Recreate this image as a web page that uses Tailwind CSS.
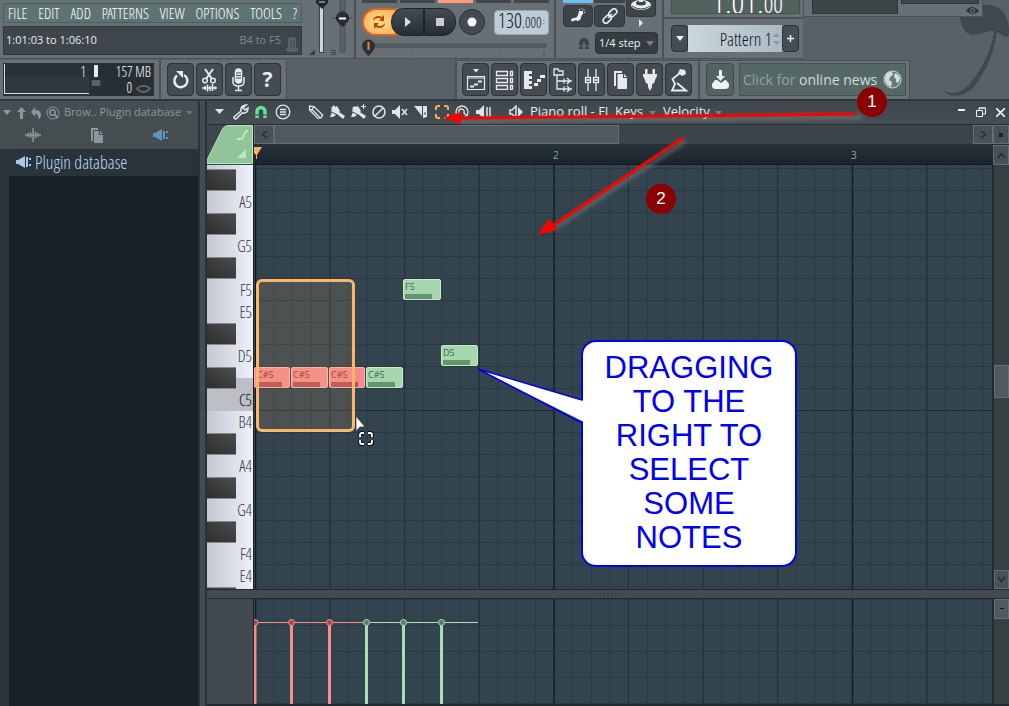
<!DOCTYPE html>
<html lang="en">
<head>
<meta charset="utf-8">
<title>Piano roll - FL Keys</title>
<script src="https://cdn.jsdelivr.net/npm/@tailwindcss/browser@4"></script>
</head>
<body class="relative flex h-screen flex-col overflow-hidden bg-[#596167] font-['Open_Sans','Noto_Sans',sans-serif] text-[#e6ecee]">

<header class="relative flex h-[101px] shrink-0 flex-col border-b-2 border-[#30373c]">
  <!-- leaf logo -->
  <svg class="absolute top-0 right-0" width="70" height="98" viewBox="0 0 70 98" aria-hidden="true">
    <path d="M21 17c1 7 3 14 9 17 7 2 12 0 17-2 6-2 10-1 13 1 3 1 5 4 8 4 2-1 2-4 2-7 0-8-3-16-9-21-5-4-12-5-18-4v12z" fill="#40484d"/>
    <path d="M55 31C53 48 46 62 38 74 29 88 18 98 4 90 10 98 23 98 34 88 48 71 56 50 58 31z" fill="#40484d"/>
  </svg>

  <div class="relative flex h-[60px] items-start">
    <!-- menu and hint panel -->
    <section class="flex h-[59px] w-[306px] flex-col gap-[3px] border-b border-[#4b5257] bg-[#687076] px-[3px] pt-[3px]">
      <nav class="flex h-5 w-[299px] items-center justify-between border border-[#4c5f60] bg-[#5c7472] px-1 font-['Open_Sans_Condensed_Light','Liberation_Sans_Narrow','Open_Sans_Condensed',sans-serif] text-[15px] leading-[18px] text-white">
        <button>FILE</button><button>EDIT</button><button>ADD</button><button>PATTERNS</button><button>VIEW</button><button>OPTIONS</button><button>TOOLS</button><button>?</button>
      </nav>
      <div class="flex h-[29px] w-[299px] items-center border border-[#31383d] bg-[#3e464b] px-[2px] text-[11px]">
        <span class="-mt-px grow">1:01:03 to 1:06:10</span><span class="text-[#7f898e]">B4 to F5</span>
        <svg class="ml-1 mt-2" width="14" height="17" viewBox="0 0 14 17" aria-hidden="true"><path d="M3 2q4-2 8 0v9l2 2q1 3-6 3t-6-3l2-2z" fill="#596267"/><path d="M6 4v8M9 4v8" stroke="#414a4f"/></svg>
      </div>
    </section>

    <!-- master sliders -->
    <section class="h-[59px] w-[48px] border-b border-[#4b5257] bg-[#687076]">
      <svg width="48" height="58" viewBox="0 0 48 58" aria-hidden="true">
        <rect x="13" y="0" width="5" height="53" fill="#40474c"/><rect x="14" y="5" width="3" height="47" fill="#ccd6da"/>
        <path d="M10 0h12v3l-6 6-6-6z" fill="#23282c"/><path d="M13 2h6" stroke="#ccd6da"/>
        <rect x="34" y="0" width="5" height="52" fill="#596066" stroke="#4b5257"/>
        <path d="M26 18h21" stroke="#454c51"/><circle cx="36.500" cy="18" r="6" fill="#2a3034" stroke="#1d2225"/><path d="M33 18.500h7" stroke="#fff" stroke-width="2"/><path d="M33 24h7l-3 3z" fill="#24292c"/>
        <path d="M9 49v6H3zM25 50h5v1h-5zm0 2h5v1h-5zm0 2h5v1h-5z" fill="#3b4247"/>
      </svg>
    </section>

    <!-- transport -->
    <section class="flex h-[59px] w-[200px] flex-col border-b border-l-2 border-[#4b5257] bg-[#687076] pr-[5px] pl-[6px]">
      <div class="flex h-1 justify-between">
        <button aria-label="Pattern mode" class="h-[3px] w-[35px] bg-[#40474c]"></button><button aria-label="Song mode" class="h-[3px] w-[35px] bg-[#40474c]"></button><button aria-label="Metronome" class="h-[3px] w-[35px] bg-[#ff9c78]"></button><button aria-label="Wait for input" class="h-[3px] w-[35px] bg-[#40474c]"></button><button aria-label="Countdown" class="h-[3px] w-[35px] bg-[#40474c]"></button>
      </div>
      <div class="mt-1 flex items-center">
        <button aria-label="Loop record" class="flex h-7 w-[35px] items-center rounded-l-full border-2 border-[#d4662c] bg-radial from-[#ffdf8c] to-[#ffad55] pl-[7px]">
          <svg width="16" height="16" viewBox="0 0 16 16"><path d="M2 7c0-5 6-6 9-4l2-2v6H8l2-2C8 3 4 4 2 7zM14 9c0 5-6 6-9 4l-2 2V9h5l-2 2c2 2 6 1 8-2z" fill="#b54a0c"/></svg>
        </button>
        <button aria-label="Play" class="-ml-[6px] flex h-7 w-[33px] items-center justify-center rounded-l-[13px] border border-[#1e2327] bg-linear-to-b from-[#454d52] to-[#272d31]"><svg width="8" height="12" viewBox="0 0 8 12"><path d="M1 1l6 5-6 5z" fill="#d7dde0"/></svg></button>
        <button aria-label="Stop" class="flex h-7 w-[32px] items-center justify-center rounded-r-[13px] border border-[#1e2327] bg-linear-to-b from-[#454d52] to-[#272d31]"><svg width="8" height="8"><rect width="8" height="8" fill="#c6cccf"/></svg></button>
        <button aria-label="Record" class="ml-[3px] flex size-[26px] items-center justify-center rounded-full border border-[#272d31] bg-[#434b50]"><svg width="10" height="10"><circle cx="5" cy="5" r="4.500" fill="#f3f6f7"/></svg></button>
        <label class="ml-[9px] flex h-[25px] w-[55px] items-center justify-between rounded border border-[#98a7ae] bg-[#bccdd6] px-[3px] font-['Open_Sans_Condensed_Light','Liberation_Sans_Narrow','Open_Sans_Condensed',sans-serif] text-[#10151a]">
          <span class="text-[20px] leading-6">130<span class="text-[14px]">.000</span></span>
          <svg width="6" height="12" viewBox="0 0 6 12"><path d="M0 4l3-3 3 3zM0 8l3 3 3-3z" fill="#93a3ab"/></svg>
        </label>
      </div>
      <svg width="187" height="22" viewBox="0 0 187 22" aria-hidden="true"><rect x="6" y="8" width="178" height="3" fill="#596066" stroke="#444b50"/><path d="M50 19v2M94 19v2M138 19v2M182 14v7" stroke="#444b50"/><path d="M0 10a6.500 6.500 0 1 1 13 0q0 4-6.500 10Q0 14 0 10z" fill="#2b3135"/><path d="M6.500 6v8" stroke="#ff7a3c" stroke-width="2"/></svg>
    </section>

    <!-- snap panel -->
    <section class="flex h-[59px] w-[108px] flex-col border-b border-l-2 border-[#4b5257] bg-[#687076] pl-[7px]">
      <div class="flex gap-px">
        <div class="flex flex-col gap-0.5"><button aria-label="Typing keyboard" class="h-[3px] w-[30px] bg-[#6cc0f2]"></button>
          <button aria-label="Step edit" class="flex h-[22px] w-[30px] items-center justify-center rounded-sm border border-[#30363a] bg-[#3d454a]"><svg width="16" height="16" viewBox="0 0 16 16"><path d="M1 12q0-2 3-2 3 0 4-3l1-4h4v3q-2 1-2 4-1 3-4 3l-1-1-2 1q-3 1-3-1z" fill="#eef1f2"/><path d="M9 1.500h1M11.500 1h1M14 1.500v1M14.500 4v1" stroke="#eef1f2" stroke-width="1.200"/></svg></button></div>
        <div class="flex flex-col gap-0.5"><button aria-label="Scroll" class="h-[3px] w-[31px] bg-[#3d454a]"></button>
          <button aria-label="Multilink" class="flex h-[22px] w-[31px] items-center justify-center rounded-sm border border-[#30363a] bg-[#3d454a]"><svg width="16" height="16" viewBox="0 0 16 16" fill="none" stroke="#e8ecee" stroke-width="1.600"><rect x="6.500" y="2" width="9" height="5.500" rx="2.700" transform="rotate(-45 11 5)"/><rect x="0.500" y="8.500" width="9" height="5.500" rx="2.700" transform="rotate(-45 5 11)"/><path d="M6 10l4-4"/></svg></button></div>
        <div class="flex flex-col items-center gap-[2px]"><button aria-label="Tool" class="flex h-[17px] w-[30px] items-start justify-center rounded-b-sm border border-t-0 border-[#30363a] bg-[#3d454a]"><svg width="22" height="12" viewBox="0 0 22 12"><ellipse cx="11" cy="5" rx="10" ry="5" fill="#eef1f2"/><ellipse cx="11" cy="3" rx="5" ry="2.500" fill="#3d454a"/><path d="M2 6q9 6 18 0" fill="none" stroke="#3d454a"/><path d="M9 0h4v2H9z" fill="#eef1f2"/></svg></button>
          <svg width="6" height="8"><path d="M1 0l4 4-4 4z" fill="#dfe4e6"/></svg></div>
      </div>
      <div class="mt-[5px] flex h-[22px] items-center gap-[3px] pl-[14px]">
        <svg width="15" height="14" viewBox="0 0 15 14" aria-hidden="true"><path d="M2 13V7a5 5 0 0 1 10 0v6H8V7.500a1 1 0 0 0-2 0V13z" fill="#3c4247"/><path d="M2 10h4M8 10h4" stroke="#687076"/></svg>
        <div class="relative flex">
          <select aria-label="Snap" class="h-[22px] w-[63px] appearance-none rounded-sm border border-[#2b3135] bg-[#363d42] pl-[3px] text-[11px] text-[#eef2f3]"><option>1/4 step</option></select>
          <svg class="pointer-events-none absolute top-[9px] right-1" width="8" height="5"><path d="M0 0h8L4 5z" fill="#788086"/></svg>
        </div>
      </div>
    </section>

    <!-- time and pattern panel -->
    <section class="flex h-[59px] w-[141px] flex-col border-b border-l-2 border-[#4b5257] bg-[#687076]">
      <div class="h-[19px] border-b-2 border-[#4b5257] pl-[7px]">
        <div class="flex h-[14px] w-[129px] items-end justify-center overflow-hidden border border-t-0 border-[#46504f] bg-[#52625f] font-['Open_Sans_Condensed_Light','Liberation_Sans_Narrow','Open_Sans_Condensed',sans-serif] text-white">
          <span class="mb-[-3px] ml-6 text-[32px] leading-[28px]">1:01.</span><span class="mb-[-3px] text-[24px] leading-[24px]">00</span>
        </div>
      </div>
      <div class="mt-[6px] flex pl-[7px]">
        <button aria-label="Pattern menu" class="flex h-[27px] w-[17px] items-center justify-center rounded-sm border border-[#2b3135] bg-[#464e53]"><svg width="8" height="5"><path d="M0 0h8L4 5z" fill="#eef2f3"/></svg></button>
        <label class="flex h-[27px] w-[94px] items-center bg-linear-to-r from-[#c9d6db] to-[#acbbc3] pr-[2px]">
          <input aria-label="Pattern" value="Pattern 1" class="w-0 grow text-right font-['Open_Sans_Condensed_Light','Liberation_Sans_Narrow','Open_Sans_Condensed',sans-serif] text-[18px] leading-6 text-[#10151a]">
          <svg class="ml-px" width="7" height="14" viewBox="0 0 7 14"><path d="M0 5l3.500-4 3.500 4zM0 9l3.500 4 3.500-4z" fill="#8b989f"/></svg>
        </label>
        <button aria-label="Add pattern" class="flex h-[27px] w-[17px] items-center justify-center rounded-sm border border-[#2b3135] bg-[#464e53]"><svg width="9" height="9"><path d="M4.500 1v7M1 4.500h7" stroke="#eef2f3" stroke-width="1.500"/></svg></button>
      </div>
    </section>

    <!-- scope and meter -->
    <section class="flex h-[17px] w-[180px] gap-[3px] border-r border-b border-l border-[#4b5257] bg-[#687076] pl-[8px]">
      <div class="h-[14px] w-[86px] border border-t-0 border-[#2f363a] bg-[#3d4549]"></div>
      <div class="flex w-[78px] flex-col items-end"><div class="h-1 w-full border border-t-0 border-[#2f363a] bg-[#3d4549]"></div>
        <svg class="mt-[2px]" width="13" height="9" viewBox="0 0 13 9"><path d="M0 5q6-8 13 0-6 6-13 0z" fill="#2c3337"/><circle cx="6.500" cy="4.500" r="2.500" fill="#687076"/><circle cx="6.500" cy="4.500" r="1.300" fill="#2c3337"/></svg></div>
    </section>
  </div>

  <div class="relative flex h-[39px]">
    <section class="w-[159px] bg-[#687076] pt-[3px] pl-[3px]">
      <div class="flex h-[33px] w-[151px] border border-[#2b3236] bg-[#262f34] font-['Open_Sans_Condensed_Light','Liberation_Sans_Narrow','Open_Sans_Condensed',sans-serif] text-[14px] leading-4 text-white">
        <div class="mb-px w-[85px] border-b border-l border-[#d5dde0] bg-linear-to-b from-[#2a3237] from-40% to-[#303a3e] to-50% pr-[3px] text-right">1</div>
        <svg class="mt-px" width="14" height="26" viewBox="0 0 14 26" aria-hidden="true"><rect x="5" width="4" height="12" fill="#e6ecee"/><rect x="3" y="15" width="8" height="6" rx="1" fill="#596267"/><path d="M2 16.500h10M2 19.500h10" stroke="#596267"/></svg>
        <div class="flex grow flex-col items-end pr-[2px]"><span>157 MB</span><span class="flex items-center gap-1">0 <svg width="15" height="9" viewBox="0 0 15 9"><path d="M1 4.500q3-3 6.500-2.500Q11 1.500 14 4.500 11 8 7.500 8T1 4.500z" fill="none" stroke="#596267" stroke-width="2"/></svg></span></div>
      </div>
    </section>
    <section class="flex w-[127px] gap-[2px] border-l-2 border-[#4b5257] bg-[#687076] pt-[3px] pl-[6px]">
      <button aria-label="Undo" class="flex h-[33px] w-[27px] items-center justify-center rounded-sm border border-[#2d3439] bg-[#444c51]"><svg width="18" height="20" viewBox="0 0 18 20"><path d="M5 5.500A6.500 6.500 0 1 0 12 5" fill="none" stroke="#e6eaec" stroke-width="2.500"/><path d="M4 1h7v7z" fill="#e6eaec"/></svg></button>
      <button aria-label="Edison" class="flex h-[33px] w-[27px] items-center justify-center rounded-sm border border-[#2d3439] bg-[#444c51]"><svg width="17" height="26" viewBox="0 0 17 26" fill="none" stroke="#e6eaec"><path d="M4 2l7 10M12 2L5 12" stroke-width="2"/><circle cx="4" cy="13.500" r="2.300" stroke-width="1.500"/><circle cx="12" cy="13.500" r="2.300" stroke-width="1.500"/><path d="M1 21h15M4 19v4M6.500 17.500v7M9 19v5M11.500 17v7M14 19.500v3" stroke-width="1.500"/></svg></button>
      <button aria-label="Record audio" class="flex h-[33px] w-[27px] items-center justify-center rounded-sm border border-[#2d3439] bg-[#444c51]"><svg width="15" height="26" viewBox="0 0 15 26" fill="none" stroke="#e6eaec" stroke-width="1.500"><rect x="4.500" y="2" width="6" height="14" rx="3" fill="#e6eaec"/><path d="M5 6h5M5 8.500h5M5 11h5" stroke="#444c51" stroke-width="1"/><path d="M2 10v5q0 4 5.500 4t5.500-4v-5M7.500 19v4M4 23.500h7"/></svg></button>
      <button aria-label="Help" class="flex h-[33px] w-[27px] items-center justify-center rounded-sm border border-[#2d3439] bg-[#444c51] text-[21px] font-bold leading-none">?</button>
    </section>
    <div class="w-[169px] border-l border-[#4b5257]"></div>
    <section class="flex w-[243px] gap-[2px] border-t border-l-2 border-[#4b5257] bg-[#687076] pt-[2px] pl-[5px]">
      <button aria-label="Playlist" class="flex h-[33px] w-[27px] items-center justify-center rounded-sm border border-[#2d3439] bg-[#444c51]"><svg width="20" height="24" viewBox="0 0 20 24" fill="none" stroke="#e6eaec"><path d="M7 1h6l-3 3.500z" fill="#e6eaec" stroke="none"/><path d="M1.500 8.500h17v13h-17zM1 10h18" stroke-width="1.200"/><path d="M4 18.500h4M8 16.500h4M12 13.500h4" stroke-width="2"/></svg></button>
      <button aria-label="Channel rack" class="flex h-[33px] w-[27px] items-center justify-center rounded-sm border border-[#2d3439] bg-[#444c51]"><svg width="19" height="20" viewBox="0 0 19 20" fill="none" stroke="#e6eaec" stroke-width="1.300"><path d="M1.500 1.500h11v4h-11zM1.500 8.500h11v4h-11zM1.500 15.500h11v4h-11zM15.500 1.500h2v4h-2zM15.500 8.500h2v4h-2zM15.500 15.500h2v4h-2z"/></svg></button>
      <button aria-label="Piano roll" class="flex h-[33px] w-[27px] items-center justify-center rounded-sm border border-[#2d3439] bg-[#444c51]"><svg width="22" height="20" viewBox="0 0 22 20" fill="#e6eaec"><path d="M1 1h8v3H6v2h3v3H6v2h3v3H6v2h3v3H1zM11 13h4v3h-4zM14 9h4v3h-4zM17 5h5v3h-5z"/></svg></button>
      <button aria-label="Browser" class="flex h-[33px] w-[27px] items-center justify-center rounded-sm border border-[#2d3439] bg-[#444c51]"><svg width="20" height="26" viewBox="0 0 20 26" fill="none" stroke="#e6eaec" stroke-width="1.300"><path d="M1 8V2h4l1 2h4v4zM4 8v14h5M4 14h5"/><path d="M9 14h10M9 22h10M11 11.500v5M14 11l3 3-3 3M11 19.500v5M14 19l3 3-3 3"/></svg></button>
      <button aria-label="Mixer" class="flex h-[33px] w-[27px] items-center justify-center rounded-sm border border-[#2d3439] bg-[#444c51]"><svg width="16" height="24" viewBox="0 0 16 24" fill="none" stroke="#e6eaec" stroke-width="1.300"><path d="M4 1v8M4 15v8M12 1v8M12 15v8M1.500 9.500h5v5h-5zM9.500 9.500h5v5h-5zM1.500 12h5M9.500 12h5"/></svg></button>
      <button aria-label="Project picker" class="flex h-[33px] w-[27px] items-center justify-center rounded-sm border border-[#2d3439] bg-[#444c51]"><svg width="15" height="20" viewBox="0 0 15 20" fill="#e6eaec"><path d="M1 1h8v2H3v13H1zM4.500 4H10v4h4v11H4.500zM11 4l3 3h-3z"/></svg></button>
      <button aria-label="Plugin picker" class="flex h-[33px] w-[27px] items-center justify-center rounded-sm border border-[#2d3439] bg-[#444c51]"><svg width="16" height="24" viewBox="0 0 16 24" fill="#e6eaec"><path d="M3 1h2.500v5H3zM10.500 1H13v5h-2.500zM1 6h14v2l-2 4q0 3-3 4v3l-2 4-2-4v-3q-3-1-3-4L1 8z"/></svg></button>
      <button aria-label="Tempo tapper" class="flex h-[33px] w-[27px] items-center justify-center rounded-sm border border-[#2d3439] bg-[#444c51]"><svg width="18" height="24" viewBox="0 0 18 24"><path d="M10 1l5 1 1 4-4 2-4-3z" fill="#e6eaec"/><path d="M10 5L2.500 11 5 16l-3 6.500h14L7 15" fill="none" stroke="#e6eaec" stroke-width="1.800"/></svg></button>
    </section>
    <section class="flex w-[212px] gap-[5px] border-t border-r border-l-2 border-[#4b5257] bg-[#687076] pt-[2px] pl-[6px]">
      <button aria-label="Download" class="flex h-[33px] w-[28px] items-center justify-center rounded-sm border border-[#3c4b4b] bg-[#536262]"><svg width="19" height="21" viewBox="0 0 19 21" fill="#eef2f3"><path d="M8 1h3v6h3l-4.500 5L5 7h3zM1 15l3-4h2l4 3 4-3h1l3 4v2q0 3-4 3H5q-4 0-4-3z"/></svg></button>
      <a href="#news" class="flex h-[33px] w-[167px] items-center border border-[#455453] bg-[#566866] pl-[3px] text-[14px] text-[#d2dddd]"><span class="text-[#93a2a1]">Click for&nbsp;</span>online news
        <svg class="ml-auto mr-[3px]" width="19" height="19" viewBox="0 0 19 19"><circle cx="9.500" cy="9.500" r="8.500" fill="#6b7a79" stroke="#d2dddd"/><path d="M3 4q4-3 6-2l1 3-3 2-1 3 3 2-1 5Q2 14 2 9zM12 3q5 2 5 6l-2 4-2-1v-3l-2-2z" fill="#d2dddd"/></svg></a>
    </section>
  </div>
</header>

<div class="flex min-h-0 grow bg-[#3f484d]">
  <!-- browser -->
  <aside class="flex w-[198px] shrink-0 flex-col bg-[#454d51] text-[#8b979c]">
    <div class="flex h-6 items-center pr-[5px] pl-[3px] pb-px text-[11px]">
      <svg width="8" height="5"><path d="M0 0h8L4 5z" fill="#8b979c"/></svg>
      <svg class="ml-[6px]" width="9" height="12" viewBox="0 0 9 12"><path d="M4.500 0L9 5H6v7H3V5H0z" fill="#8b979c"/></svg>
      <svg class="ml-[5px]" width="10" height="12" viewBox="0 0 10 12"><path d="M4 0v3q6 0 6 5 0 3-3 4 1-5-3-5v3L0 5z" fill="#8b979c"/></svg>
      <svg class="ml-[5px]" width="14" height="14" viewBox="0 0 14 14" fill="none" stroke="#8b979c"><circle cx="7" cy="7" r="6"/><circle cx="6.500" cy="6.500" r="2.800" stroke-width="1.500"/><path d="M9 9l3 3" stroke-width="2"/></svg>
      <span class="ml-[4px]">Brow..</span><span class="ml-[3px] grow">Plugin database</span>
      <svg width="7" height="4"><path d="M0 0h7L3.500 4z" fill="#6a757a"/></svg>
    </div>
    <div class="flex h-6 items-center justify-around pr-1 pb-1">
      <button aria-label="All"><svg width="16" height="14" viewBox="0 0 16 14"><path d="M0 7h16M3 5v4M5.500 4v6M8 0v14M10.500 3.500v7M13 5v4" stroke="#8b979c" stroke-width="1.500"/></svg></button>
      <button aria-label="Current project"><svg width="13" height="15" viewBox="0 0 13 15" fill="#8b979c"><path d="M1 0h7v2H3v11H1zM4 3h5v4h4v8H4zM10 3l3 3h-3z"/></svg></button>
      <button aria-label="Plugins"><svg width="16" height="12" viewBox="0 0 16 12" fill="#6493bb"><path d="M0 4h2l7-4v12L2 8H0zM10 2h2v8h-2zM13 2h2v2h-2zM13 8h2v2h-2z"/></svg></button>
    </div>
    <div class="flex grow bg-[#2a343a]">
      <div class="ml-[9px] grow bg-[#182127] text-[#bcd8f8]">
        <button class="flex h-[27px] w-full items-center gap-1 bg-[#29343a] pb-px pl-[7px] font-['Open_Sans_Condensed_Light','Liberation_Sans_Narrow','Open_Sans_Condensed',sans-serif] text-[18px] leading-6"><svg width="15" height="12" viewBox="0 0 15 12" fill="#a9c8ec"><path d="M0 4h2l7-4v12L2 8H0zM10 1h2v10h-2zM13 2h2v2h-2zM13 8h2v2h-2z"/></svg>Plugin database</button>
      </div>
    </div>
  </aside>
  <div class="flex w-[9px] shrink-0 items-center justify-center border-x-2 border-[#293238] bg-[#444c51]"><svg width="5" height="20" aria-hidden="true"><path d="M1.500 0v20M4.500 0v20" stroke="#2c3439" stroke-dasharray="1 3"/></svg></div>

  <!-- piano roll window -->
  <main class="flex min-w-0 grow flex-col">
    <div class="flex h-6 shrink-0 items-center border-b border-[#262e33] bg-linear-to-b from-[#3e474c] to-[#464e53] pb-px pl-2">
      <button aria-label="Menu"><svg width="9" height="6"><path d="M0 0h9L4.500 5z" fill="#dfe5e7"/></svg></button>
      <button aria-label="Tools" class="ml-[9px]"><svg width="16" height="16" viewBox="0 0 16 16"><path d="M1 13l7-6q-1-5 5-6l-3 3 2 2 3-2q0 6-6 5l-6 6q-2 0-2-2z" fill="none" stroke="#dfe5e7" stroke-width="1.600"/></svg></button>
      <button aria-label="Snap" class="ml-[5px]"><svg width="14" height="14" viewBox="0 0 14 14"><path d="M3 13V6.500a4 4 0 0 1 8 0V13" fill="none" stroke="#65e096" stroke-width="3.500"/><path d="M1 10h5M8 10h5" stroke="#3e474c"/></svg></button>
      <button aria-label="Stamp" class="ml-[7px]"><svg width="16" height="16" viewBox="0 0 16 16" fill="none" stroke="#dfe5e7" stroke-width="1.300"><circle cx="8" cy="8" r="6.800"/><path d="M5 5.500h6M5 8h6M5 10.500h6"/></svg></button>
      <button aria-label="Draw" class="ml-[17px]"><svg width="16" height="16" viewBox="0 0 16 16" fill="none" stroke="#dfe5e7" stroke-width="1.300"><path d="M1.500 2v4l8 8q4 1 5-3L6 2.500zM1.500 6l2.500-.5L6 2.500M4 5.500l7.500 7.500"/></svg></button>
      <button aria-label="Paint" class="ml-[5px]"><svg width="17" height="16" viewBox="0 0 17 16" fill="#dfe5e7"><path d="M5 1l1 2 2-1 3 5-1 1 6 4-2 3-6-5-2 1-4-4 1-2-1-1z"/><path d="M1 13l2-5 4 3-3 2z"/><path d="M3 8l5 3" stroke="#444c51"/></svg></button>
      <button aria-label="Paint sequence" class="ml-[4px]"><svg width="17" height="16" viewBox="0 0 17 16" fill="#dfe5e7"><path d="M5 2l1 1 2-1 3 5-1 1 6 4-2 3-6-5-2 1-4-4 1-2-1-1z"/><path d="M1 13l2-5 4 3-3 2zM13 0h1v2h2v1h-2v2h-1V3h-2V2h2z"/><path d="M3 8l5 3" stroke="#444c51"/></svg></button>
      <button aria-label="Delete" class="ml-[5px]"><svg width="14" height="14" viewBox="0 0 14 14" fill="none" stroke="#dfe5e7" stroke-width="1.600"><circle cx="7" cy="7" r="6"/><path d="M3 11l8-8"/></svg></button>
      <button aria-label="Mute" class="ml-[6px]"><svg width="16" height="14" viewBox="0 0 16 14"><path d="M0 5h3l5-5v14L3 9H0z" fill="#dfe5e7"/><path d="M10 4l5 6M15 4l-5 6" stroke="#dfe5e7" stroke-width="1.500"/></svg></button>
      <button aria-label="Slice" class="ml-[5px]"><svg width="17" height="14" viewBox="0 0 17 14"><path d="M1 1h8v10z" fill="#dfe5e7"/><path d="M10 1h4v11l-4 1z" fill="#dfe5e7"/><path d="M12 7v3" stroke="#444"/></svg></button>
      <button aria-label="Select" class="ml-[5px]"><svg width="14" height="14" viewBox="0 0 14 14" fill="none" stroke="#ffa95c" stroke-width="2"><path d="M1 5V3q0-2 2-2h2M9 1h2q2 0 2 2v2M13 9v2q0 2-2 2H9M5 13H3q-2 0-2-2V9"/></svg></button>
      <button aria-label="Zoom" class="ml-[6px]"><svg width="15" height="15" viewBox="0 0 15 15" fill="none" stroke="#dfe5e7" stroke-width="1.300"><circle cx="7" cy="7" r="6"/><path d="M4 8q-1-4 3-4 3 1 2 4l3 3"/></svg></button>
      <button aria-label="Playback" class="ml-[6px]"><svg width="16" height="14" viewBox="0 0 16 14"><path d="M0 5h3l5-5v14L3 9H0z" fill="#dfe5e7"/><path d="M11 2v10M14 2v10" stroke="#dfe5e7" stroke-width="1.500"/></svg></button>
      <button aria-label="Target" class="ml-[17px]"><svg width="15" height="14" viewBox="0 0 15 14"><path d="M1 5h2l4-4v12L3 9H1z" fill="none" stroke="#dfe5e7" stroke-width="1.500"/><path d="M9 2l5 5-5 5z" fill="#dfe5e7"/></svg></button>
      <button class="ml-[6px] text-[13px]">Piano roll - FL Keys</button><svg class="mt-[2px] ml-[6px]" width="7" height="4"><path d="M0 0h7L3.500 4z" fill="#788388"/></svg>
      <button class="ml-[7px] text-[13px]">Velocity</button><svg class="mt-[2px] ml-[5px]" width="7" height="4"><path d="M0 0h7L3.500 4z" fill="#788388"/></svg>
      <div class="ml-auto flex items-center gap-[10px] pr-[4px]">
        <button aria-label="Minimize"><svg width="8" height="10"><path d="M0 3h7" stroke="#eef2f3" stroke-width="2"/></svg></button>
        <button aria-label="Restore"><svg width="10" height="10" viewBox="0 0 10 10" fill="none" stroke="#eef2f3"><path d="M.5 3.500h6v6h-6zM3 3V1h6.500v6H7M3 1h6"/></svg></button>
        <button aria-label="Close"><svg width="9" height="9"><path d="M0 0l9 9M9 0L0 9" stroke="#eef2f3" stroke-width="1.600"/></svg></button>
      </div>
    </div>

    <div class="flex h-10 shrink-0">
      <div class="h-10 w-[47px] shrink-0 border-r border-[#242c31] bg-[#3e474c]">
        <svg width="46" height="39" viewBox="0 0 46 39" aria-hidden="true"><path d="M0 38.500V35L15 5q2-4.500 7-4.500h23.500v38z" fill="#92c49a" stroke="#b6e6bd"/><path d="M30 14h4q2 0 3-4t4-4" fill="none" stroke="#b9e9c4" stroke-width="1.800"/><path d="M30 33h9V24z" fill="#b9e9c4"/></svg>
      </div>
      <div class="flex min-w-0 grow flex-col">
        <div class="flex h-5 border-b border-[#262e33] bg-[#3b4448]">
          <button aria-label="Scroll left" class="flex w-5 shrink-0 items-center justify-center border border-[#656e74] bg-[#495157]"><svg width="7" height="9"><path d="M6 1L1.500 4.500 6 8" fill="none" stroke="#252d32" stroke-width="1.500"/></svg></button>
          <div class="w-[345px] shrink-0 border border-[#656e74] bg-[#51595f]"></div>
          <div class="grow"></div>
          <button aria-label="Scroll right" class="flex w-5 items-center justify-center border border-[#656e74] bg-[#495157]"><svg width="7" height="9"><path d="M1 1l4.500 3.500L1 8" fill="none" stroke="#252d32" stroke-width="1.500"/></svg></button>
          <button aria-label="Zoom reset" class="flex w-4 items-center justify-center border border-[#656e74] bg-[#495157]"><svg width="4" height="4"><rect width="4" height="4" fill="#1c2327"/></svg></button>
        </div>
        <div class="flex grow bg-linear-to-b from-[#27333a] to-[#18232a]">
          <div class="relative grow border-b border-[#101a20] text-[10px] text-[#93a2aa]">
            <svg class="absolute top-[2px] left-0" width="9" height="13" viewBox="0 0 9 13"><path d="M0 0h8L3 8v4H2V8L0 6z" fill="#f5b35f"/></svg>
            <span class="absolute top-[3px] left-[299px]">2</span><span class="absolute top-[3px] left-[597px]">3</span>
          </div>
          <button aria-label="Scroll up" class="flex w-4 items-center justify-center border border-[#656e74] bg-[#495157]"><svg width="9" height="7"><path d="M1 6l3.500-4.500L8 6" fill="none" stroke="#252d32" stroke-width="1.500"/></svg></button>
        </div>
      </div>
    </div>

    <!-- keyboard and note grid -->
    <div class="flex min-h-0 grow overflow-hidden">
      <div class="relative w-[47px] shrink-0 overflow-hidden border-r border-[#18232a] bg-linear-to-r from-[#c4c8d0] to-[#eef1fb] pt-[4px] font-['Open_Sans_Condensed_Light','Liberation_Sans_Narrow','Open_Sans_Condensed',sans-serif] text-[16px] leading-[22px] text-[#33383d]">
        <div class="absolute top-[213px] left-0 h-[33px] w-full bg-[#bcbfc5]"></div>
        <div class="relative flex flex-col pr-px text-right">
          <div class="h-[22px] w-[29px] border-y border-[#888] bg-linear-to-tr from-[#2c2d2f] to-[#4c4e50]"></div>
          <div class="h-[22px]">A5</div>
          <div class="h-[22px] w-[29px] border-y border-[#888] bg-linear-to-tr from-[#2c2d2f] to-[#4c4e50]"></div>
          <div class="h-[22px]">G5</div>
          <div class="h-[22px] w-[29px] border-y border-[#888] bg-linear-to-tr from-[#2c2d2f] to-[#4c4e50]"></div>
          <div class="h-[22px]">F5</div>
          <div class="h-[22px]">E5</div>
          <div class="h-[22px] w-[29px] border-y border-[#888] bg-linear-to-tr from-[#2c2d2f] to-[#4c4e50]"></div>
          <div class="h-[22px]">D5</div>
          <div class="h-[22px] w-[29px] border-y border-[#888] bg-linear-to-tr from-[#2c2d2f] to-[#4c4e50]"></div>
          <div class="h-[22px] text-[#0c0f12]">C5</div>
          <div class="h-[22px]">B4</div>
          <div class="h-[22px] w-[29px] border-y border-[#888] bg-linear-to-tr from-[#2c2d2f] to-[#4c4e50]"></div>
          <div class="h-[22px]">A4</div>
          <div class="h-[22px] w-[29px] border-y border-[#888] bg-linear-to-tr from-[#2c2d2f] to-[#4c4e50]"></div>
          <div class="h-[22px]">G4</div>
          <div class="h-[22px] w-[29px] border-y border-[#888] bg-linear-to-tr from-[#2c2d2f] to-[#4c4e50]"></div>
          <div class="h-[22px]">F4</div>
          <div class="h-[22px]">E4</div>
          <div class="h-[22px] w-[29px] border-y border-[#888] bg-linear-to-tr from-[#2c2d2f] to-[#4c4e50]"></div>
        </div>
      </div>
      <div class="relative grow overflow-hidden bg-[#34444e]">
        <svg class="absolute inset-0" width="100%" height="100%" aria-hidden="true">
          <defs>
            <pattern id="steps" x="1" width="18.650" height="22" y="3" patternUnits="userSpaceOnUse"><path d="M.5 0v22M0 .5h18.650" stroke="#2b3a43"/></pattern>
            <pattern id="velsteps" x="1" width="18.650" height="26" patternUnits="userSpaceOnUse"><path d="M.5 0v26M0 .5h18.650" stroke="#2b3a43"/></pattern>
            <pattern id="beats" x="1" width="74.600" height="100" patternUnits="userSpaceOnUse"><path d="M.5 0v100" stroke="#202e36"/></pattern>
            <pattern id="bars" x="1" width="298.400" height="100" patternUnits="userSpaceOnUse"><path d="M.5 0v100" stroke="#111d24" stroke-width="1.600"/></pattern>
          </defs>
          <rect width="100%" height="100%" fill="url(#steps)"/><rect width="100%" height="100%" fill="url(#beats)"/><rect width="100%" height="100%" fill="url(#bars)"/>
          <path d="M0 245.500h4000" stroke="#202e36"/>
        </svg>
        <div class="absolute top-[202px] left-0 h-[21px] w-9 rounded-[2px] border border-[#ffb2ae] bg-[#f58c8a] pl-[2px] text-[9px] leading-[13px] text-[#8a3436]">C#5<div class="mt-px h-[5px] w-[25px] bg-[#b45255]"></div></div>
        <div class="absolute top-[202px] left-[37px] h-[21px] w-[37px] rounded-[2px] border border-[#ffb2ae] bg-[#f58c8a] pl-px text-[9px] leading-[13px] text-[#8a3436]">C#5<div class="mt-px h-[5px] w-[27px] bg-[#b45255]"></div></div>
        <div class="absolute top-[202px] left-[75px] h-[21px] w-[36px] rounded-[2px] border border-[#ffb2ae] bg-[#f58c8a] pl-px text-[9px] leading-[13px] text-[#8a3436]">C#5<div class="mt-px h-[5px] w-[27px] bg-[#b45255]"></div></div>
        <div class="absolute top-[202px] left-[112px] h-[21px] w-[37px] rounded-[2px] border border-[#c4ebca] bg-[#a5d6ae] pl-px text-[9px] leading-[13px] text-[#3f6b4b]">C#5<div class="mt-px h-[5px] w-[27px] bg-[#63946d]"></div></div>
        <div class="absolute top-[114px] left-[149px] h-[21px] w-[38px] rounded-[2px] border border-[#c4ebca] bg-[#a5d6ae] pl-px text-[9px] leading-[13px] text-[#3f6b4b]">F5<div class="mt-px h-[5px] w-[27px] bg-[#63946d]"></div></div>
        <div class="absolute top-[180px] left-[187px] h-[21px] w-[37px] rounded-[2px] border border-[#c4ebca] bg-[#a5d6ae] pl-px text-[9px] leading-[13px] text-[#3f6b4b]">D5<div class="mt-px h-[5px] w-[27px] bg-[#63946d]"></div></div>
        <div class="absolute top-[114px] left-[2px] h-[153px] w-[99px] rounded-[6px] border-3 border-[#fdb568] bg-[#fdb568]/12"></div>
        <svg class="absolute top-[251px] left-[101px]" width="24" height="32" viewBox="0 0 24 32" aria-hidden="true"><path d="M1 0v15l4-4 5 0z" fill="#fff" stroke="#222" stroke-width=".6"/><g fill="none"><path d="M5 20v-1q0-2 2-2h2M13 17h2q2 0 2 2v2M17 24v2q0 2-2 2h-2M9 28H7q-2 0-2-2v-2" stroke="#111" stroke-width="4"/><path d="M5 21v-2q0-2 2-2h2M13 17h2q2 0 2 2v2M17 24v2q0 2-2 2h-2M9 28H7q-2 0-2-2v-2" stroke="#fff" stroke-width="1.800"/></g></svg>
      </div>
      <div class="flex w-[17px] shrink-0 flex-col border-l-2 border-[#232b30] bg-[#383f42]">
        <div class="grow-[201]"></div><div class="h-[33px] border border-[#656e74] bg-[#51595f]"></div><div class="grow-[172]"></div>
        <button aria-label="Scroll down" class="flex h-[19px] items-center justify-center border border-[#656e74] bg-[#495157]"><svg width="9" height="7"><path d="M1 1l3.500 4.500L8 1" fill="none" stroke="#252d32" stroke-width="1.500"/></svg></button>
      </div>
    </div>

    <div class="flex h-[10px] shrink-0 items-center justify-center border-y border-[#222a2f] bg-[#434b50]"><svg width="18" height="5" aria-hidden="true"><path d="M0 1.500h18M0 3.500h18" stroke="#30383d" stroke-dasharray="2 2"/></svg></div>

    <!-- velocity lane -->
    <div class="flex h-[105px] shrink-0">
      <div class="w-[47px] shrink-0 border-r border-[#18232a] bg-[#434a4f]"></div>
      <div class="relative grow overflow-hidden bg-[#34444e]">
        <svg class="absolute inset-0" width="100%" height="100%" aria-label="Note velocities">
          <rect width="100%" height="100%" fill="url(#velsteps)"/><rect width="100%" height="100%" fill="url(#beats)"/><rect width="100%" height="100%" fill="url(#bars)"/>
          <path d="M0 23.500h112" stroke="#f5908f"/><path d="M112 23.500h112" stroke="#a9dfb4"/>
          <path d="M1 24v90M37.500 24v90M75.500 24v90" stroke="#f5908f" stroke-width="3"/><path d="M112.500 24v90M149.500 24v90M187.500 24v90" stroke="#a9dfb4" stroke-width="3"/>
          <g fill="#a8474a" stroke="#f5908f"><circle cx="1" cy="23.500" r="3"/><circle cx="37.500" cy="23.500" r="3"/><circle cx="75.500" cy="23.500" r="3"/></g>
          <g fill="#547d63" stroke="#a9dfb4"><circle cx="112.500" cy="23.500" r="3"/><circle cx="149.500" cy="23.500" r="3"/><circle cx="187.500" cy="23.500" r="3"/></g>
        </svg>
      </div>
      <div class="w-[17px] shrink-0 border-l-2 border-[#232b30] bg-[#383f42]">
        <button aria-label="Shrink lane" class="flex h-[20px] w-full items-center justify-center border border-[#656e74] bg-[#51595f]"><svg width="4" height="2"><rect width="4" height="1" fill="#10171b"/></svg></button>
      </div>
    </div>
    <div class="h-[2px] shrink-0 bg-[#232b30]"></div>
  </main>
</div>

<!-- annotations -->
<svg class="pointer-events-none absolute top-0 left-0" width="1009" height="706" viewBox="0 0 1009 706" aria-hidden="true">
  <defs><filter id="soft" x="-10%" y="-10%" width="120%" height="120%"><feGaussianBlur stdDeviation="2"/></filter></defs>
  <path d="M862 117L458 121M685 141L555 228" stroke="#888" stroke-opacity=".55" stroke-width="4" filter="url(#soft)"/>
  <path d="M855 114L458 118M683 138L552 226" stroke="#f00" stroke-width="3"/>
  <path d="M443 118l18-6v12zM537 235l12-16 8 11z" fill="#f00"/>
</svg>
<div class="absolute top-[340px] left-[581px] w-[216px] rounded-[15px] border-2 border-[#0000f5] bg-white px-4 pt-[9px] pb-[10px] text-center font-['Liberation_Sans',sans-serif] text-[31px] leading-[34px] text-[#0000f5]">DRAGGING<br>TO THE<br>RIGHT TO<br>SELECT<br>SOME<br>NOTES</div>
<svg class="absolute top-[367px] left-[477px]" width="108" height="58" viewBox="0 0 108 58" aria-hidden="true"><path d="M107 34L1 2l106 53z" fill="#fff"/><path d="M105 33L1 2l104 54" fill="none" stroke="#0000f5" stroke-width="1.500"/><path d="M106 32h2v25h-2z" fill="#fff"/></svg>
<div class="absolute top-[87px] left-[857px] flex size-[30px] items-center justify-center rounded-full bg-[#8b0000] font-['Liberation_Sans',sans-serif] text-[17px] text-white">1</div>
<div class="absolute top-[184px] left-[646px] flex size-[30px] items-center justify-center rounded-full bg-[#8b0000] font-['Liberation_Sans',sans-serif] text-[17px] text-white">2</div>
</body>
</html>
